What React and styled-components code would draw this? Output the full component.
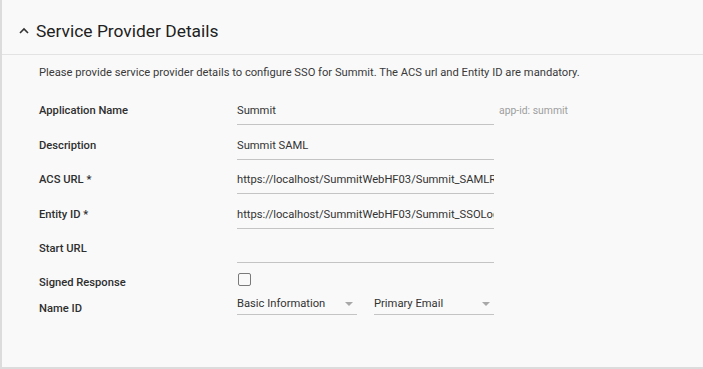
import styled, { createGlobalStyle } from "styled-components";

const GlobalStyle = createGlobalStyle`
    html, body {
        margin: 0;
        padding: 0;
        background: #ffffff;
    }
    body {
        font-family: Roboto, "Liberation Sans", Arial, sans-serif;
    }
`

const ChevronUp = () => (
    <svg width="12" height="12" viewBox="0 0 12 12">
        <path d="M2 8 L6 4 L10 8" fill="none" stroke="#333" strokeWidth="1.6" />
    </svg>
)

const fields = [
    { label: "Application Name", value: "Summit", note: "app-id: summit" },
    { label: "Description", value: "Summit SAML" },
    { label: "ACS URL *", value: "https://localhost/SummitWebHF03/Summit_SAMLResponse.aspx" },
    { label: "Entity ID *", value: "https://localhost/SummitWebHF03/Summit_SSOLogin.aspx" },
    { label: "Start URL", value: "" },
]

const App = () => {
    return (
        <>
            <GlobalStyle />
            <Card>
                <Header>
                    <ChevronUp />
                    <Title>Service Provider Details</Title>
                </Header>
                <Body>
                    <Intro>
                        Please provide service provider details to configure SSO for Summit. The ACS url and Entity ID are mandatory.
                    </Intro>
                    {fields.map((f) => (
                        <Row key={f.label} $h={34.5}>
                            <Label>{f.label}</Label>
                            <TextInput readOnly defaultValue={f.value} />
                            {f.note && <Note>{f.note}</Note>}
                        </Row>
                    ))}
                    <Row $h={32}>
                        <Label $dy={6}>Signed Response</Label>
                        <Checkbox />
                    </Row>
                    <Row $h={26}>
                        <Label $dy={0}>Name ID</Label>
                        <SelectGroup>
                            <Select $w={120}>
                                Basic Information
                                <Caret />
                            </Select>
                            <Select $w={120}>
                                Primary Email
                                <Caret />
                            </Select>
                        </SelectGroup>
                    </Row>
                </Body>
            </Card>
        </>
    )
}

const Card = styled.div`
    width: 703px;
    height: 369px;
    box-sizing: border-box;
    background: #f9f9f9;
    border-left: 2px solid #dcdcdc;
    border-bottom: 2px solid #dcdcdc;
    display: flex;
    flex-direction: column;
`

const Header = styled.div`
    height: 55px;
    box-sizing: border-box;
    padding: 8px 0 0 16px;
    display: flex;
    align-items: center;
    gap: 6px;
    border-bottom: 1px solid #e3e3e3;
`

const Title = styled.span`
    font-size: 17.4px;
    color: #212121;
`

const Body = styled.div`
    padding: 10px 0 0 37px;
    display: flex;
    flex-direction: column;
`

const Intro = styled.div`
    font-size: 11.2px;
    line-height: 16px;
    color: #3a3a3a;
    margin-bottom: 9.5px;
`

const Row = styled.div`
    height: ${(p) => p.$h}px;
    display: flex;
    align-items: flex-end;
`

const Label = styled.span`
    width: 198px;
    flex: none;
    align-self: stretch;
    display: flex;
    align-items: ${(p) => (p.$dy !== undefined ? "center" : "flex-end")};
    padding-top: ${(p) => p.$dy || 0}px;
    box-sizing: border-box;
    height: ${(p) => (p.$dy !== undefined ? "auto" : "28px")};
    margin-top: auto;
    line-height: 28px;
    font-size: 11.2px;
    font-weight: 500;
    color: #2e2e2e;
`

const TextInput = styled.input`
    width: 257px;
    height: 28px;
    box-sizing: border-box;
    border: none;
    border-bottom: 1px solid #c4c4c4;
    background: transparent;
    padding: 0;
    margin: 0;
    font-family: Roboto, "Liberation Sans", Arial, sans-serif;
    font-size: 11.2px;
    color: #333;
    outline: none;
`

const Note = styled.span`
    height: 28px;
    line-height: 28px;
    padding-left: 5px;
    font-size: 10.4px;
    color: #9e9e9e;
`

const Checkbox = styled.span`
    width: 13px;
    height: 13px;
    box-sizing: border-box;
    margin: 9px 0 8px 1px;
    border: 1.5px solid #7a7a7a;
    border-radius: 2px;
    align-self: center;
`

const SelectGroup = styled.div`
    display: flex;
    gap: 17px;
    align-self: flex-start;
    margin-top: -2px;
`

const Select = styled.div`
    width: ${(p) => p.$w}px;
    height: 22px;
    box-sizing: border-box;
    border-bottom: 1px solid #c4c4c4;
    display: flex;
    align-items: center;
    justify-content: space-between;
    padding-right: 4px;
    font-size: 11.2px;
    color: #333;
`

const Caret = styled.span`
    width: 0;
    height: 0;
    border-left: 4.5px solid transparent;
    border-right: 4.5px solid transparent;
    border-top: 4.5px solid #a8a8a8;
`

export default App;
